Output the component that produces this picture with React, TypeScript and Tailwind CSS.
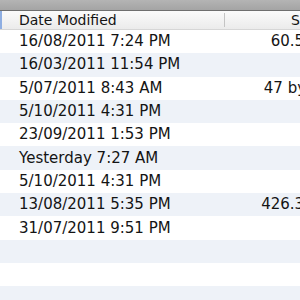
const rows: { date: string; size: string }[] = [
  { date: '16/08/2011 7:24 PM', size: '60.5 KB' },
  { date: '16/03/2011 11:54 PM', size: '' },
  { date: '5/07/2011 8:43 AM', size: '47 bytes' },
  { date: '5/10/2011 4:31 PM', size: '' },
  { date: '23/09/2011 1:53 PM', size: '' },
  { date: 'Yesterday 7:27 AM', size: '' },
  { date: '5/10/2011 4:31 PM', size: '' },
  { date: '13/08/2011 5:35 PM', size: '426.3 KB' },
  { date: '31/07/2011 9:51 PM', size: '' },
  { date: '', size: '' },
  { date: '', size: '' },
  { date: '', size: '' },
]

export default function App() {
  return (
    <div className="h-[300px] w-[300px] overflow-hidden bg-white font-['DejaVu_Sans',sans-serif] text-[#141414]">
      <div className="h-[10px] bg-gradient-to-b from-[#b4b4b4] to-[#a4a4a4]" />
      <div className="flex h-[20px] border-t border-[#6f6f6f] border-b border-b-[#d6d6d6] bg-gradient-to-b from-[#fbfbfb] to-[#ebebeb]">
        <div className="flex w-[224px] shrink-0 items-center border-l-2 border-[#8eaee2] pl-[17px] text-[14px] leading-none">
          Date Modified
        </div>
        <div className="my-[2px] w-px shrink-0 bg-[#c4c4c4]" />
        <div className="flex shrink-0 items-center pl-[66px] text-[14px] leading-none">Size</div>
      </div>
      <div className="flex flex-col">
        {rows.map((r, i) => (
          <div
            key={i}
            className={`flex h-[23.3px] shrink-0 items-center text-[15px] leading-none ${i % 2 === 1 ? 'bg-[#eef2f8]' : 'bg-white'}`}
          >
            <div className="w-[225px] shrink-0 whitespace-nowrap pl-[19px]">{r.date}</div>
            <div className="w-[104px] shrink-0 whitespace-nowrap text-right">{r.size}</div>
          </div>
        ))}
      </div>
    </div>
  )
}
